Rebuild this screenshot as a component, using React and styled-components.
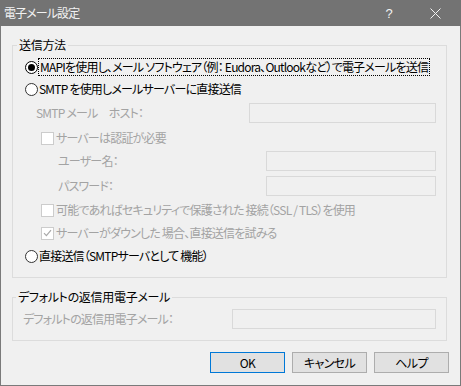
import React from 'react';
import styled, { createGlobalStyle, css } from 'styled-components';

const GlobalStyle = createGlobalStyle`
    html, body {
        margin: 0;
        padding: 0;
        background: #f0f0f0;
    }
    body {
        font-family: "Noto Sans CJK JP", "Noto Sans", sans-serif;
        font-size: 12px;
        font-feature-settings: "palt" 1;
    }
`;

const Window = styled.div`
    box-sizing: border-box;
    display: flex;
    flex-direction: column;
    width: 461px;
    height: 386px;
    background: #f0f0f0;
    border: 1px solid #7a7a7a;
    border-top: none;
`;
const TitleBar = styled.div`
    display: flex;
    align-items: center;
    height: 26px;
    margin: 0 -1px;
    padding: 0 3px 0 4px;
    background: #737373;
    color: #f2f2f2;
    font-size: 12px;
`;
const Title = styled.div`
    flex: 1;
    line-height: 26px;
    letter-spacing: -0.9px;
`;
const TitleButton = styled.div`
    display: flex;
    align-items: center;
    justify-content: center;
    width: ${(props) => props.width}px;
    height: 26px;
    margin-left: ${(props) => props.gap || 0}px;
    color: #f2f2f2;
    font-family: "Liberation Sans", sans-serif;
    font-size: 13px;
`;
const Body = styled.div`
    display: flex;
    flex-direction: column;
    padding: 19px 13px 0 11px;
`;
const Group = styled.div`
    position: relative;
    border: 1px solid #dcdcdc;
    margin-bottom: ${(props) => props.gapAfter || 0}px;
    padding: ${(props) => props.pad};
`;
const Legend = styled.span`
    position: absolute;
    top: -9px;
    left: ${(props) => props.left}px;
    padding: 0 2px;
    background: #f0f0f0;
    color: #000;
    line-height: 16px;
    letter-spacing: -0.3px;
`;
const Rows = styled.div`
    display: grid;
    grid-template-columns: minmax(0, 1fr);
    grid-template-rows: 22px 22px 26px 24px 22px 28px 20px 26px 20px;
`;
const Row = styled.div`
    display: flex;
    align-items: center;
    min-width: 0;
    padding-left: ${(props) => props.indent || 0}px;
    color: ${(props) => (props.disabled ? '#a3a3a3' : '#000')};
    white-space: nowrap;
    letter-spacing: -0.8px;
`;
const FieldRow = styled(Row)`
    justify-content: space-between;
`;
const Input = styled.div`
    box-sizing: border-box;
    flex: none;
    width: ${(props) => props.width}px;
    height: 20px;
    border: 1px solid #d9d9d9;
    background: #f0f0f0;
`;
const Radio = styled.span`
    box-sizing: border-box;
    position: relative;
    flex: none;
    width: 13px;
    height: 13px;
    margin-right: 1px;
    border-radius: 50%;
    border: 1px solid #333;
    background: #fff;
    ${(props) => props.checked && css`
        border-color: #000;
        &::after {
            content: '';
            position: absolute;
            left: 2px;
            top: 2px;
            width: 7px;
            height: 7px;
            border-radius: 50%;
            background: #000;
        }
    `}
`;
const Check = styled.span`
    box-sizing: border-box;
    display: flex;
    align-items: center;
    justify-content: center;
    flex: none;
    width: 13px;
    height: 13px;
    margin-right: 2px;
    border: 1px solid #cccccc;
    background: #fff;
`;
const Focus = styled.span`
    padding: 0 1px;
    line-height: 16px;
    outline: 1px dotted #000;
    outline-offset: 0;
`;
const Label = styled.span`
    line-height: 16px;
`;
const Buttons = styled.div`
    display: flex;
    justify-content: flex-end;
    gap: 7px;
    margin-top: 11px;
    margin-right: -2px;
`;
const Button = styled.div`
    box-sizing: border-box;
    display: flex;
    align-items: center;
    justify-content: center;
    width: 75px;
    height: 21px;
    border: 1px solid ${(props) => (props.isDefault ? '#0078d7' : '#adadad')};
    background: #e1e1e1;
    color: #000;
    font-size: 12px;
    letter-spacing: -0.6px;
`;

function CheckMark() {
    return (
        <svg width="9" height="8" viewBox="0 0 9 8">
            <path d="M1 4.2 L3.4 6.6 L8 1.2" fill="none" stroke="#a8a8a8" strokeWidth="1.2" />
        </svg>
    );
}

function CloseIcon() {
    return (
        <svg width="11" height="11" viewBox="0 0 11 11">
            <path d="M0.5 0.5 L10.5 10.5 M10.5 0.5 L0.5 10.5" stroke="#f2f2f2" strokeWidth="1" />
        </svg>
    );
}

function App() {
    return (
        <Window>
            <GlobalStyle />
            <TitleBar>
                <Title>電子メール設定</Title>
                <TitleButton width={16}>?</TitleButton>
                <TitleButton width={46} gap={15}>
                    <CloseIcon />
                </TitleButton>
            </TitleBar>
            <Body>
                <Group gapAfter={19} pad="10px 10px 11px 12px">
                    <Legend left={4}>送信方法</Legend>
                    <Rows>
                        <Row>
                            <Radio checked />
                            <Focus>MAPIを使用し、メール ソフトウェア（例： Eudora、Outlookなど）で電子メールを送信</Focus>
                        </Row>
                        <Row>
                            <Radio />
                            <Label>SMTP を使用しメールサーバーに直接送信</Label>
                        </Row>
                        <FieldRow indent={11} disabled>
                            <Label>SMTP メール　ホスト：</Label>
                            <Input width={187} />
                        </FieldRow>
                        <Row indent={16} disabled>
                            <Check />
                            <Label>サーバーは認証が必要</Label>
                        </Row>
                        <FieldRow indent={33} disabled>
                            <Label>ユーザー名：</Label>
                            <Input width={170} />
                        </FieldRow>
                        <FieldRow indent={33} disabled>
                            <Label>パスワード：</Label>
                            <Input width={170} />
                        </FieldRow>
                        <Row indent={16} disabled>
                            <Check />
                            <Label>可能であればセキュリティで保護された 接続（SSL / TLS）を使用</Label>
                        </Row>
                        <Row indent={16} disabled>
                            <Check>
                                <CheckMark />
                            </Check>
                            <Label>サーバーがダウンした 場合、直接送信を試みる</Label>
                        </Row>
                        <Row>
                            <Radio />
                            <Label>直接送信（SMTPサーバとして 機能）</Label>
                        </Row>
                    </Rows>
                </Group>
                <Group pad="11px 10px 11px 10px">
                    <Legend left={3}>デフォルトの返信用電子メール</Legend>
                    <FieldRow disabled>
                        <Label>デフォルトの返信用電子メール：</Label>
                        <Input width={204} />
                    </FieldRow>
                </Group>
                <Buttons>
                    <Button isDefault>OK</Button>
                    <Button>キャンセル</Button>
                    <Button>ヘルプ</Button>
                </Buttons>
            </Body>
        </Window>
    );
}

export default App;
